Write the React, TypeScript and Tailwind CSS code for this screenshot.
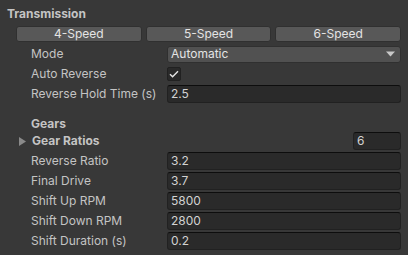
const font = { fontFamily: 'Inter, "Noto Sans", sans-serif' }

function Field({ value, className = '' }: { value: string; className?: string }) {
  return (
    <div
      className={`h-[18px] rounded-[3px] border border-[#212121] border-t-[#0d0d0d] bg-[#2a2a2a] pl-[3px] text-[12px] leading-[16px] text-[#d2d2d2] ${className}`}
    >
      {value}
    </div>
  )
}

function Row({ label, children }: { label: string; children: React.ReactNode }) {
  return (
    <div className="flex h-[20px] items-center">
      <div className="w-[167px] shrink-0 whitespace-nowrap pl-[31px] text-[12px] text-[#c4c4c4]">{label}</div>
      <div className="flex-1 pr-[7px]">{children}</div>
    </div>
  )
}

export default function App() {
  const speeds = ['4-Speed', '5-Speed', '6-Speed']
  const gears = [
    ['Reverse Ratio', '3.2'],
    ['Final Drive', '3.7'],
    ['Shift Up RPM', '5800'],
    ['Shift Down RPM', '2800'],
    ['Shift Duration (s)', '0.2'],
  ]

  return (
    <div className="h-[255px] w-[408px] overflow-hidden bg-[#383838] pt-[4px]" style={font}>
      <div className="h-[20px] pl-[7px] text-[12px] font-bold leading-[20px] text-[#c4c4c4]">Transmission</div>

      <div className="mt-[2px] ml-[16px] mr-[7px] flex gap-[4px]">
        {speeds.map((s) => (
          <div
            key={s}
            className="flex h-[16px] flex-1 items-center justify-center rounded-[3px] border border-[#303030] bg-[#585858] text-[12px] text-[#e4e4e4]"
          >
            {s}
          </div>
        ))}
      </div>

      <div className="mt-[2px]">
        <Row label="Mode">
          <div className="flex h-[17px] items-center justify-between rounded-[3px] border border-[#303030] bg-[#515151] pl-[3px] pr-[5px] text-[12px] text-[#e4e4e4]">
            <span>Automatic</span>
            <svg width="9" height="6" viewBox="0 0 9 6">
              <path d="M0 0.5h9L4.5 5.5z" fill="#c8c8c8" />
            </svg>
          </div>
        </Row>
        <Row label="Auto Reverse">
          <div className="flex h-[14px] w-[14px] items-center justify-center rounded-[2px] border border-[#212121] bg-[#2a2a2a]">
            <svg width="10" height="8" viewBox="0 0 10 8">
              <path d="M1 4.2l2.6 2.6L9 1.2" fill="none" stroke="#e6e6e6" strokeWidth="1.4" />
            </svg>
          </div>
        </Row>
        <Row label="Reverse Hold Time (s)">
          <Field value="2.5" />
        </Row>
      </div>

      <div className="mt-[9px] h-[18px] pl-[31px] pt-[4px] text-[12px] font-bold leading-[14px] text-[#c4c4c4]">Gears</div>

      <div className="flex h-[20px] items-center">
        <svg className="ml-[19px]" width="8" height="9" viewBox="0 0 8 9">
          <path d="M0 0l7 4.5L0 9z" fill="#8a8a8a" />
        </svg>
        <span className="ml-[5px] flex-1 text-[12px] font-bold text-[#c4c4c4]">Gear Ratios</span>
        <Field value="6" className="mr-[7px] w-[48px]" />
      </div>

      {gears.map(([l, v]) => (
        <Row key={l} label={l}>
          <Field value={v} />
        </Row>
      ))}
    </div>
  )
}
